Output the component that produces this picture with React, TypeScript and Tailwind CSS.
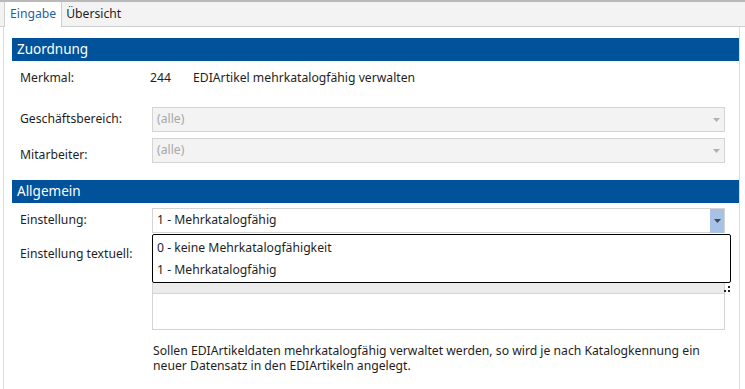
import React from "react";

const Arrow = ({ color }: { color: string }) => (
  <svg width="7" height="4" viewBox="0 0 7 4">
    <polygon points="0,0 7,0 3.5,4" fill={color} />
  </svg>
);

const Header = ({ title }: { title: string }) => (
  <div className="h-[23px] bg-[#00529b] text-white text-[13.5px] leading-[23px] pl-[5px]">{title}</div>
);

const GraySelect = () => (
  <div className="flex-1 h-[25px] bg-[#f3f3f3] border border-[#d4d4d4] flex items-center pl-[4px] pr-[4px] text-[#a8a8a8]">
    <span className="flex-1">(alle)</span>
    <Arrow color="#b0b0b0" />
  </div>
);

export default function App() {
  return (
    <div
      className="w-[745px] h-[389px] bg-white overflow-hidden text-[12.2px] text-[#1e1e1e] relative"
      style={{ fontFamily: '"Noto Sans", "Open Sans", sans-serif' }}
    >
      <div className="h-[2px] bg-[#b9b9b9]" />
      <div className="h-[25px] bg-[#f3f3f3] border-b border-[#cfcfcf] flex items-end pl-[4px]">
        <div className="h-[25px] bg-white border-l border-r border-[#cfcfcf] px-[5px] text-[#1f5fa6] leading-[24px] mb-[-1px]">
          Eingabe
        </div>
        <div className="h-[24px] px-[4px] leading-[24px] text-[#1e1e1e]">Übersicht</div>
      </div>
      <div className="ml-[3px] mr-[5px] border-l border-r border-[#dcdcdc] h-[362px] pl-[8px] pt-[11px]">
        <Header title="Zuordnung" />
        <div className="pl-[8px] pr-[14px]">
          <div className="h-[32px] flex items-center mt-[1px]">
            <span className="w-[130px]">Merkmal:</span>
            <span className="w-[43px]">244</span>
            <span>EDIArtikel mehrkatalogfähig verwalten</span>
          </div>
          <div className="h-[12px]" />
          <div className="flex items-center h-[25px] mt-[1px]">
            <span className="w-[132px]">Geschäftsbereich:</span>
            <GraySelect />
          </div>
          <div className="flex items-center h-[25px] mt-[6px]">
            <span className="w-[132px] pt-[10px]">Mitarbeiter:</span>
            <GraySelect />
          </div>
        </div>
        <div className="h-[17px]" />
        <Header title="Allgemein" />
        <div className="pl-[8px] pr-[14px] pt-[5px] relative">
          <div className="flex items-center h-[25px]">
            <span className="w-[132px]">Einstellung:</span>
            <div className="flex-1 h-[25px] bg-white border border-[#d4d4d4] flex items-center pl-[4px]">
              <span className="flex-1">1 - Mehrkatalogfähig</span>
              <div className="w-[14px] h-[24px] bg-[#a8c2e6] flex items-center justify-center">
                <Arrow color="#3c4a5c" />
              </div>
            </div>
          </div>
          <div className="flex mt-[6px]">
            <span className="w-[132px] pt-[6px]">Einstellung textuell:</span>
            <div className="flex-1 flex flex-col">
              <div className="h-[54px] bg-[#ececec] border border-[#d4d4d4] border-b-0" />
              <div className="h-[37px] border border-[#d4d4d4] bg-white" />
            </div>
          </div>
          <div className="absolute left-[140px] top-[31px] w-[579px] h-[49px] bg-white border border-black rounded-[2px] flex flex-col pl-[4px] pt-[2px]">
            <div className="h-[22px] leading-[22px]">0 - keine Mehrkatalogfähigkeit</div>
            <div className="h-[22px] leading-[22px]">1 - Mehrkatalogfähig</div>
          </div>
          <div className="absolute left-[711px] top-[83px] w-[8px] h-[8px]">
            <svg width="8" height="8" viewBox="0 0 8 8">
              <rect x="5" y="0" width="2" height="2" fill="#222" />
              <rect x="5" y="4" width="2" height="2" fill="#222" />
              <rect x="1" y="4" width="2" height="2" fill="#222" />
            </svg>
          </div>
          <div className="pl-[133px] pt-[13px] leading-[15px]">
            Sollen EDIArtikeldaten mehrkatalogfähig verwaltet werden, so wird je nach Katalogkennung ein
            <br />
            neuer Datensatz in den EDIArtikeln angelegt.
          </div>
        </div>
      </div>
    </div>
  );
}
